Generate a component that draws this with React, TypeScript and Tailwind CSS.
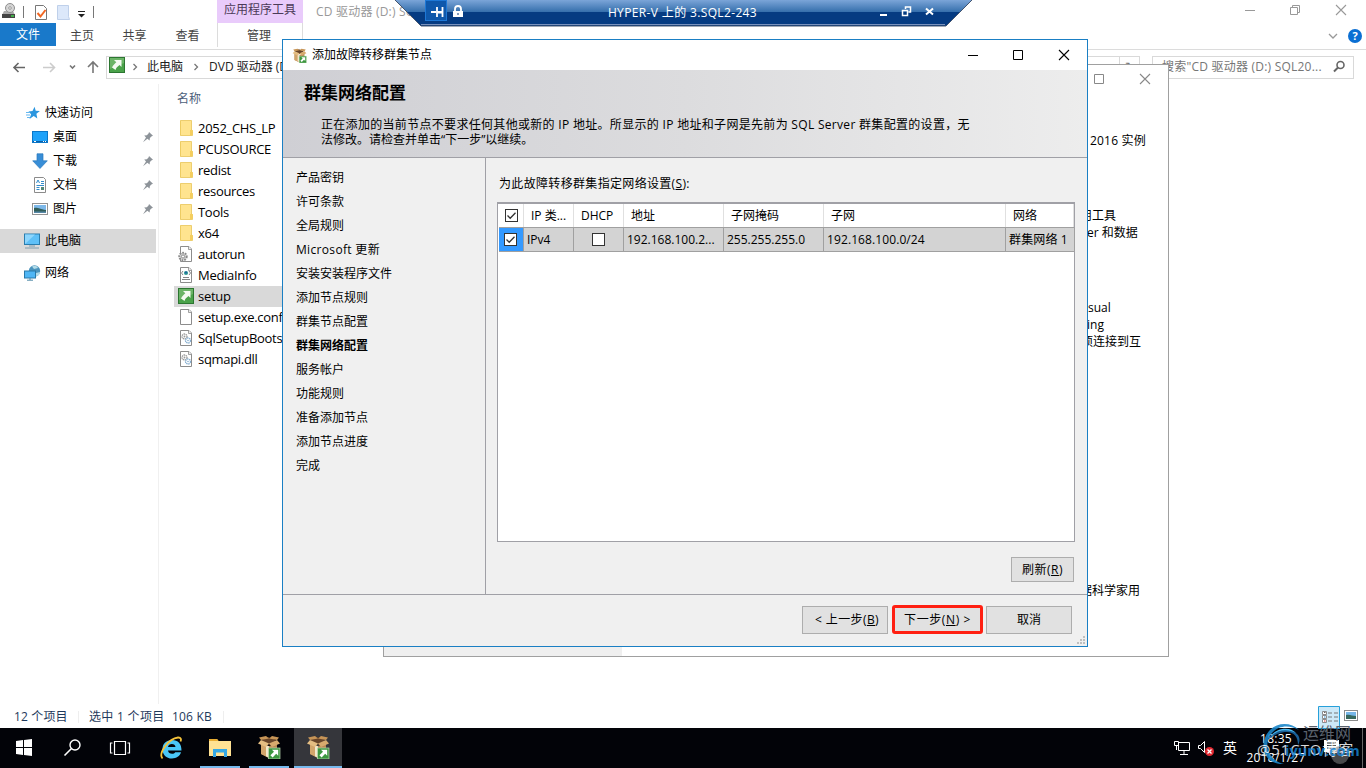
import type { ReactNode } from 'react';

interface IconProps {
  className?: string;
}

const FolderIcon = () => (
  <svg width="16" height="16" viewBox="0 0 16 16">
    <path d="M2 .5h11.5v9l1 .7v5.3H2z" fill="#ffe48f" />
    <path d="M2.500.5h11V10l1 .5v5h-12z" fill="none" stroke="#e9c558" strokeWidth=".8" />
    <path d="M12 15V10h2.500v5z" fill="#f5ce5d" />
  </svg>
);

const PageIcon = ({ kind }: { kind: 'plain' | 'gear' | 'media' | 'dll' }) => (
  <svg width="16" height="16" viewBox="0 0 16 16">
    <path d="M2.500.5h8.500l2.500 2.500v12.500h-11z" fill="#fff" stroke="#8c8c8c" />
    <path d="M10.500.5v3h3" fill="#eee" stroke="#8c8c8c" strokeWidth=".8" />
    {kind === 'gear' && (
      <>
        <circle cx="5" cy="10.500" r="3.700" fill="#ddd" stroke="#8b8b8b" strokeWidth="2" strokeDasharray="1.700 1" />
        <circle cx="5" cy="10.500" r="1.600" fill="#fff" stroke="#8b8b8b" />
      </>
    )}
    {kind === 'media' && (
      <>
        <path d="M5 4 3.500 6 5 8M11 4l1.500 2L11 8M5 10.500h6M4 12.500h8" fill="none" stroke="#777" strokeWidth=".9" />
        <circle cx="8" cy="6" r="2.100" fill="#2f9c93" />
        <circle cx="8" cy="5.500" r="1" fill="#2357a5" />
      </>
    )}
    {kind === 'dll' && (
      <>
        <circle cx="6.500" cy="6.500" r="2.500" fill="none" stroke="#999" strokeWidth="1.300" strokeDasharray="1.500 .6" />
        <circle cx="6.500" cy="6.500" r=".9" fill="#999" />
        <circle cx="10" cy="10.500" r="2.500" fill="#fff" stroke="#84add0" strokeWidth="1.300" strokeDasharray="1.500 .6" />
        <circle cx="10" cy="10.500" r=".8" fill="#84add0" />
      </>
    )}
  </svg>
);

const SetupIcon = ({ className }: IconProps) => (
  <svg width="16" height="16" viewBox="0 0 16 16" className={className}>
    <rect x=".5" y=".5" width="15" height="15" fill="#4aa24a" stroke="#2c7631" />
    <path d="M1 1h14v5L1 12z" fill="#82c07b" opacity=".6" />
    <path d="M5 3h7.500v7l-2-2c-2 1.500-3.500 3-4 5L3 10.500C4 8.500 5.500 7 7.300 5.300z" fill="#f4faf2" />
  </svg>
);

const BoxIcon = ({ size }: { size: number }) => (
  <svg width={size} height={size} viewBox="0 0 24 24">
    <path d="M4 9l8 2 8-2v10l-8 4-8-4z" fill="#b98a55" />
    <path d="M4 9l7 2v11.500L4 19z" fill="#d2a56b" />
    <path d="M9 10.500l3 .7v11.500l-3-1.500z" fill="#f3e8cd" />
    <path d="M4 5l7-3 8 3-7 5z" fill="#68452a" />
    <path d="M4 5 1 8.500 9 12l3-3.500z" fill="#e4bd82" />
    <path d="M20 5l3 3.500L15 12l-3-3.500z" fill="#d7aa6e" />
    <path d="M4 5 2 2.500 9 1l3 2.500zM20 5l2-2.500L15 1l-3 2.500z" fill="#c79557" />
    <rect x="11.500" y="13" width="11.500" height="11" fill="#3c963f" stroke="#b9dab2" strokeWidth=".7" />
    <path d="M15 14.700h6.200v6.100l-2-2-3.600 3.700-2.200-2.200 3.600-3.600z" fill="#fff" />
  </svg>
);

const PinIcon = () => (
  <svg width="12" height="12" viewBox="0 0 12 12">
    <path d="M7 1l4 3.800-1.300.5-1.800 1.800-.3 2.500L5.400 7.700 1 11.300 4 6.500 2.200 4.500l2.700-.3 1.800-1.900z" fill="#8d9399" />
  </svg>
);

const PcIcon = () => (
  <svg width="16" height="16" viewBox="0 0 16 16">
    <rect x=".5" y="1" width="15" height="10.500" fill="#5fc0f7" stroke="#2a7dae" />
    <path d="M1 11V1.500h10z" fill="#8ed6fd" />
    <path d="M5 13h6M1 15h14" stroke="#7f9dae" />
  </svg>
);

const NetworkIcon = () => (
  <svg width="17" height="16" viewBox="0 0 17 16">
    <circle cx="10.500" cy="6" r="5.700" fill="#4b94bd" />
    <path d="M8 1.500c3-1.500 5-.5 6 1.500l-4 1zM12 8l4-1c0 3-2 4-4 4z" fill="#b4dce8" />
    <rect x=".5" y="6" width="11" height="7" fill="#4fb6f5" stroke="#2978a8" />
    <path d="M3 15.200h6M6 13v2" stroke="#528ba9" />
  </svg>
);

const DesktopIcon = () => (
  <svg width="16" height="16" viewBox="0 0 16 16">
    <rect x=".5" y="2.500" width="15" height="11" fill="#1ea2fa" stroke="#0b77c9" />
    <path d="M1 12.500h14" stroke="#0c5ea5" />
    <path d="M2 12.500h2M11 12.500h1M13 12.500h1" stroke="#fff" />
  </svg>
);

const DownloadIcon = () => (
  <svg width="16" height="16" viewBox="0 0 16 16">
    <path d="M5 .8h6v7h4.300L8 15.500.7 7.800H5z" fill="#388ed7" stroke="#2a78bd" strokeWidth=".7" />
  </svg>
);

const DocumentIcon = () => (
  <svg width="16" height="16" viewBox="0 0 16 16">
    <path d="M2.500.5h9l2 2v13h-11z" fill="#fff" stroke="#8b8b8b" />
    <path d="M4.500 6 6 3l1.500 3M9 4.500h3M9 6.500h3M4.500 8.500H12M4.500 10.500h3M4.500 12.500h3" fill="none" stroke="#338dcc" />
    <path d="M9 10h3v3H9z" fill="#528677" />
  </svg>
);

const PictureIcon = () => (
  <svg width="16" height="16" viewBox="0 0 16 16">
    <rect x=".5" y="2.500" width="15" height="11" fill="#fff" stroke="#929292" />
    <rect x="2" y="4" width="12" height="8" fill="#7db8e9" />
    <path d="M2 7c4-1 5 1 12 2v3H2z" fill="#315d58" />
    <path d="M2 10.500h12V12H2z" fill="#5788a7" />
  </svg>
);

const StarIcon = () => (
  <svg width="14" height="14" viewBox="0 0 14 14">
    <path d="M8.600.7 9.700 4.800l4.200.2-3.500 2.800.9 4.800-3.600-2.500-4.200 3 1.600-4.900L2.500 5.500l4-.6z" fill="#2b96df" />
    <path d="M0 6.500h4M0 9h4M1 11.500h3" stroke="#65b7ef" />
  </svg>
);

const WindowButtons = ({ color, restore }: { color: string; restore?: boolean }) => (
  <svg width="104" height="14" viewBox="0 0 104 14" fill="none" stroke={color}>
    <path d="M1 7.500h10" />
    {restore ? (
      <path d="M46.500 4.500h7v7h-7zM48.500 4.500v-2h7v7h-2" />
    ) : (
      <path d="M46.500 2.500h9v9h-9z" />
    )}
    <path d="m92 2 10 10m0-10L92 12" strokeWidth="1.100" />
  </svg>
);

const Checkbox = ({ checked }: { checked?: boolean }) => (
  <svg width="13" height="13" viewBox="0 0 13 13">
    <rect x=".5" y=".5" width="12" height="12" fill="#fff" stroke="#333" />
    {checked && <path d="m2.500 6.500 2.700 2.700 5.300-5.500" fill="none" stroke="#333" strokeWidth="1.300" />}
  </svg>
);

const quickAccess = [
  { label: '桌面', icon: <DesktopIcon /> },
  { label: '下载', icon: <DownloadIcon /> },
  { label: '文档', icon: <DocumentIcon /> },
  { label: '图片', icon: <PictureIcon /> },
];

const files: { name: string; icon: ReactNode }[] = [
  { name: '2052_CHS_LP', icon: <FolderIcon /> },
  { name: 'PCUSOURCE', icon: <FolderIcon /> },
  { name: 'redist', icon: <FolderIcon /> },
  { name: 'resources', icon: <FolderIcon /> },
  { name: 'Tools', icon: <FolderIcon /> },
  { name: 'x64', icon: <FolderIcon /> },
  { name: 'autorun', icon: <PageIcon kind="gear" /> },
  { name: 'MediaInfo', icon: <PageIcon kind="media" /> },
  { name: 'setup', icon: <SetupIcon /> },
  { name: 'setup.exe.config', icon: <PageIcon kind="plain" /> },
  { name: 'SqlSetupBootstrapper.dll', icon: <PageIcon kind="dll" /> },
  { name: 'sqmapi.dll', icon: <PageIcon kind="dll" /> },
];

const steps = [
  '产品密钥',
  '许可条款',
  '全局规则',
  'Microsoft 更新',
  '安装安装程序文件',
  '添加节点规则',
  '群集节点配置',
  '群集网络配置',
  '服务帐户',
  '功能规则',
  '准备添加节点',
  '添加节点进度',
  '完成',
];
const CURRENT_STEP = '群集网络配置';

const ExplorerTop = () => (
  <header className="h-[84px]">
    <div className="flex h-[23px]">
      <div className="flex w-[217px] items-center pl-0.5">
        <svg width="96" height="22" viewBox="0 0 96 22">
          <path d="M0 14h13l-2-4H2z" fill="#aaa" />
          <rect y="13" width="13" height="4" fill="#444" />
          <path d="M9 15h3" stroke="#40d34b" strokeWidth="1.500" />
          <circle cx="8" cy="7" r="4.500" fill="#d5d5d5" stroke="#8e8e8e" />
          <circle cx="8" cy="7" r="1.300" fill="#fff" stroke="#999" />
          <path d="M21.500 5v12M91.500 5v12" stroke="#777" />
          <path d="M33.500 4.500h8l3 3v11h-11z" fill="#fff" stroke="#777" />
          <path d="m35.500 12 3 3.500 5-6.500" fill="none" stroke="#f26722" strokeWidth="2" />
          <path d="M55.500 4.500h11v11l1 3h-12z" fill="#dce8fa" stroke="#bfd0ea" />
          <path d="M76 10.500h7" stroke="#222" />
          <path d="M76 13h7l-3.500 3.500z" fill="#222" />
        </svg>
      </div>
      <div className="flex w-[86px] justify-center bg-[#e9cbfb] pt-px text-[#4b3a57]">
        <span className="leading-[18px]">应用程序工具</span>
      </div>
      <span className="pl-[13px] pt-[3px] leading-[18px] tracking-[0.2px] text-[#999]">CD 驱动器 (D:) SQL2016</span>
      <div className="ml-auto pr-[18px] pt-[3px]">
        <WindowButtons color="#999" restore />
      </div>
    </div>
    <div className="flex h-[27px] border-b border-[#dcdcdc] text-[#444]">
      <div className="flex h-[23px] w-14 items-center justify-center bg-[#1979ca] text-white">文件</div>
      <div className="flex h-[25px] w-[52px] items-center justify-center">主页</div>
      <div className="flex h-[25px] w-[53px] items-center justify-center">共享</div>
      <div className="flex h-[25px] w-[53px] items-center justify-center">查看</div>
      <div className="ml-[3px] flex h-6 w-[86px] items-center justify-center border-x border-[#dcdcdc] pr-0.5 pt-px">管理</div>
      <div className="ml-auto flex items-center gap-2.5 pr-1">
        <svg width="10" height="6" viewBox="0 0 10 6" fill="none" stroke="#999" strokeWidth="1.300">
          <path d="m1 1 4 4 4-4" />
        </svg>
        <span className="flex h-3.5 w-3.5 items-center justify-center rounded-full bg-[#0b6fd3] text-[11px] font-bold text-white">
          ?
        </span>
      </div>
    </div>
    <div className="flex h-[34px] items-center">
      <svg width="106" height="24" viewBox="0 0 106 24" fill="none" strokeWidth="1.600">
        <path d="M25 12.500H14m4.500-4.500L14 12.500l4.500 4.500" stroke="#666" />
        <path d="M43 12.500h11.500M50 8l4.500 4.500L50 17" stroke="#ccc" />
        <path d="m70 10.500 2.500 2.500 2.500-2.500" stroke="#777" />
        <path d="M93 18V7m-5 5 5-5 5 5" stroke="#777" />
      </svg>
      <div className="flex h-[23px] w-[1034px] items-center border border-[#d9d9d9] pl-0.5">
        <SetupIcon className="mb-1" />
        <svg width="6" height="8" viewBox="0 0 6 8" className="ml-[7px]" fill="none" stroke="#777" strokeWidth="1.300">
          <path d="m1.500 1 3 3-3 3" />
        </svg>
        <span className="ml-[9px] text-[#222]">此电脑</span>
        <svg width="6" height="8" viewBox="0 0 6 8" className="ml-2.5" fill="none" stroke="#777" strokeWidth="1.300">
          <path d="m1.500 1 3 3-3 3" />
        </svg>
        <span className="ml-2.5 whitespace-nowrap text-[#222]">DVD 驱动器 (D:) SQL2016</span>
        <div className="ml-auto flex h-full w-5 items-center justify-center border-l border-[#d9d9d9] text-[#777]">↻</div>
      </div>
      <div className="ml-3 flex h-[23px] w-[202px] items-center border border-[#d9d9d9] pl-[9px] text-[#767676]">
        <span className="whitespace-nowrap tracking-[0.22px]">搜索&quot;CD 驱动器 (D:) SQL20...</span>
        <svg width="14" height="14" viewBox="0 0 14 14" className="ml-auto mr-[7px]" fill="none" stroke="#666">
          <circle cx="8.500" cy="5" r="3.500" strokeWidth="1.600" />
          <path d="m6 7.500-4 4" strokeWidth="2" />
        </svg>
      </div>
    </div>
  </header>
);

const Explorer = () => (
  <section className="flex h-[728px] w-full flex-col bg-white">
    <ExplorerTop />
    <div className="flex h-[620px]">
      <nav className="w-[159px] border-r border-[#f0f0f0] pt-[17px]">
        <div className="flex h-6 items-center pl-[26px]">
          <StarIcon />
          <span className="ml-[5px]">快速访问</span>
        </div>
        {quickAccess.map((item) => (
          <div key={item.label} className="flex h-6 items-center pl-8 pr-1">
            {item.icon}
            <span className="ml-[5px]">{item.label}</span>
            <span className="ml-auto">
              <PinIcon />
            </span>
          </div>
        ))}
        <div className="mt-2 flex h-6 w-[156px] items-center bg-[#d9d9d9] pl-6">
          <PcIcon />
          <span className="ml-[5px]">此电脑</span>
        </div>
        <div className="mt-2 flex h-6 items-center pl-6">
          <NetworkIcon />
          <span className="ml-1">网络</span>
        </div>
      </nav>
      <div className="w-[140px] pl-[15px]">
        <div className="flex h-[34px] items-center pb-1 pl-[3px] text-[#4c607a]">名称</div>
        <ul className="w-[200px]">
          {files.map((file) => (
            <li
              key={file.name}
              className={`flex h-[21px] items-center pb-px pl-1 text-[13px] tracking-[-0.3px] ${file.name === 'setup' ? 'bg-[#d9d9d9]' : ''}`}
            >
              {file.icon}
              <span className="ml-1 whitespace-nowrap">{file.name}</span>
            </li>
          ))}
        </ul>
      </div>
    </div>
    <footer className="flex h-6 items-center pl-3.5 pt-px text-[#1e395b]">
      <span className="w-[65px] border-r border-[#eee] leading-3 tracking-[0.15px]">12 个项目</span>
      <span className="ml-2.5 w-[75px] whitespace-nowrap leading-[18px] tracking-[0.3px]">选中 1 个项目</span>
      <span className="ml-2 w-[52px] whitespace-nowrap border-r border-[#eee] leading-3 tracking-[0.2px]">106 KB</span>
      <div className="ml-auto mr-1.5 flex h-6 items-center">
        <svg width="42" height="24" viewBox="0 0 42 24">
          <path d="M.5 1.500h21v22H.5z" fill="#cce8f7" stroke="#26a0da" />
          <path d="M4.500 6.500h4v3h-4zm0 4h4v3h-4zm0 4h4v3h-4z" fill="#fff" stroke="#8b8b8b" />
          <path d="M10 8h4m2 0h4m-10 4h4m2 0h4m-10 4h4m2 0h4" stroke="#777" />
          <path d="M6 7.500h1.500" stroke="#666" />
          <path d="M6 12h1.500" stroke="#258dd2" />
          <path d="M6 16h1.500" stroke="#d33" />
          <rect x="26.500" y="5.500" width="13" height="10" fill="#fff" stroke="#8c8c8c" />
          <path d="M28 7h10v7H28z" fill="#76b6e8" />
          <path d="M28 10c4-1 6 1 10 1v3H28z" fill="#38695e" />
        </svg>
      </div>
    </footer>
  </section>
);

// The installation centre window, mostly hidden behind the wizard
const InstallCenter = () => (
  <section className="absolute left-[383px] top-16 flex h-[593px] w-[786px] flex-col border border-[#a0a0a0] bg-white">
    <div className="flex h-[75px] justify-end pr-4 pt-[7px]">
      <WindowButtons color="#888" />
    </div>
    <div className="flex grow">
      <div className="w-[238px] bg-[#efefef]" />
      <div className="flex grow flex-col items-start whitespace-nowrap pl-[463px] leading-[17px]">
        <p className="-mt-2 ml-[5px] h-[75px] tracking-[0.2px]">2016 实例</p>
        <p className="-ml-[17px]">使用工具</p>
        <p className="h-[75px] pl-[2px]">er 和数据</p>
        <p className="pl-[3px]">sual</p>
        <p className="pl-[2px]">ing</p>
        <p className="-ml-1 h-[249px]">项连接到互</p>
        <p className="-ml-[5px]">据科学家用</p>
      </div>
    </div>
  </section>
);

const cell = 'flex items-center border-r border-[#a0a0a0] pl-[3px]';
const headCell = 'flex items-center border-r border-[#e0e0e0] pl-[7px]';

const NetworkGrid = () => (
  <div className="mt-[9px] h-[340px] w-[578px] border border-t-2 border-[#a0a0a6] bg-white pl-px">
    <div className="grid h-6 grid-cols-[25px_50px_50px_100px_100px_182px_68px] border-b border-[#a0a0a0]">
      <div className="flex items-center border-r border-[#e0e0e0] pl-1.5">
        <Checkbox checked />
      </div>
      <div className={headCell}>IP 类...</div>
      <div className={headCell}>DHCP</div>
      <div className={headCell}>地址</div>
      <div className={headCell}>子网掩码</div>
      <div className={headCell}>子网</div>
      <div className={headCell}>网络</div>
    </div>
    <div className="grid h-6 grid-cols-[25px_50px_50px_100px_100px_182px_69px] border-b border-[#a0a0a0] bg-[#d3d3d3]">
      <div className="flex items-center border-r border-[#a0a0a0] bg-[#3399ff] pl-[5px]">
        <Checkbox checked />
      </div>
      <div className={cell}>IPv4</div>
      <div className="flex items-center justify-center border-r border-[#a0a0a0]">
        <Checkbox />
      </div>
      <div className={cell}>192.168.100.2...</div>
      <div className={cell}>255.255.255.0</div>
      <div className={`${cell} tracking-[0.1px]`}>192.168.100.0/24</div>
      <div className={`${cell} whitespace-nowrap tracking-[0.15px]`}>群集网络 1</div>
    </div>
  </div>
);

const Wizard = () => (
  <section className="absolute left-[282px] top-[39px] flex h-[608px] w-[806px] flex-col border border-[#1a7fc4] bg-[#f0f0f0]">
    <div className="flex h-[30px] shrink-0 items-center bg-white pl-[9px] pr-4">
      <BoxIcon size={15} />
      <span className="ml-[5px]">添加故障转移群集节点</span>
      <div className="ml-auto">
        <WindowButtons color="#000" />
      </div>
    </div>
    <div className="h-[88px] shrink-0 border-b border-[#a0a0a6] bg-linear-to-r from-[#cfcfd4] via-[#dcdcde] to-[#ededed] pl-[21px] pt-[11px]">
      <h1 className="text-[17px] font-bold leading-6">群集网络配置</h1>
      <div className="mt-3 whitespace-nowrap pl-[17px] leading-[15px]">
        <p className="tracking-[0.31px]">
          正在添加的当前节点不要求任何其他或新的 IP 地址。所显示的 IP 地址和子网是先前为 SQL Server 群集配置的设置，无
        </p>
        <p>法修改。请检查并单击“下一步”以继续。</p>
      </div>
    </div>
    <div className="flex h-[437px] shrink-0 border-b border-[#a0a0a6]">
      <ul className="w-[203px] border-r border-[#a0a0a6] pl-[13px] pt-2">
        {steps.map((step) => (
          <li
            key={step}
            className={`h-6 leading-6 ${step === CURRENT_STEP ? 'font-bold' : ''} ${step.startsWith('Microsoft') ? 'tracking-[0.33px]' : ''}`}
          >
            {step}
          </li>
        ))}
      </ul>
      <div className="flex grow flex-col pl-[11px] pt-[17px]">
        <p className="pl-0.5 leading-[18px] tracking-[0.33px]">
          为此故障转移群集指定网络设置(<u>S</u>):
        </p>
        <NetworkGrid />
        <button className="ml-[514px] mt-[15px] h-[25px] w-[63px] border border-[#adadad] bg-[#e1e1e1] tracking-[0.5px]">
          刷新(<u>R</u>)
        </button>
      </div>
    </div>
    <div className="flex grow items-start justify-end pr-[15px] pt-2.5">
      <button className="mt-px h-7 w-[86px] whitespace-nowrap border border-[#adadad] bg-[#e1e1e1] pl-1 tracking-[0.4px]">
        &lt; 上一步(<u>B</u>)
      </button>
      <button className="ml-1 h-[29px] w-[91px] whitespace-nowrap rounded-[3px] border-3 border-[#ff2012] bg-[#e1e1e1] tracking-[0.6px]">
        下一步(<u>N</u>) &gt;
      </button>
      <button className="ml-[3px] mt-px h-7 w-[86px] border border-[#adadad] bg-[#e1e1e1]">取消</button>
    </div>
    <svg width="8" height="8" viewBox="0 0 8 8" className="absolute bottom-0.5 right-0.5" fill="#bfbfbf">
      <path d="M6 0h2v2H6zM3 3h2v2H3zM6 3h2v2H6zM0 6h2v2H0zM3 6h2v2H3zM6 6h2v2H6z" />
    </svg>
  </section>
);

const ConnectionBar = () => (
  <div className="absolute left-[395px] top-0 h-[27px] w-[577px]">
    <svg width="577" height="27" viewBox="0 0 577 27" className="absolute inset-0">
      <defs>
        <linearGradient id="bar" x1="0" y1="0" x2="0" y2="1">
          <stop offset="0" stopColor="#7ba5d8" />
          <stop offset=".46" stopColor="#356fac" />
          <stop offset=".47" stopColor="#053b82" />
          <stop offset="1" stopColor="#053b82" />
        </linearGradient>
      </defs>
      <path d="M0 0h577l-26 26H26z" fill="url(#bar)" />
      <path d="m0 0 26 26h525l26-26" fill="none" stroke="#44546e" />
      <path d="M26 24.500h524" stroke="#7891bd" />
      <rect x="30.500" y=".5" width="21" height="20" fill="#0f58ab" stroke="#1e78d6" />
      <path d="M36 12h5M42 7v10M42 12h5M47.500 7v10" stroke="#fff" strokeWidth="1.800" />
      <path d="M43 13h5" stroke="#fff" />
      <path d="M58 11h10v6H58z" fill="#fff" />
      <path d="M60 11V9a3 3 0 0 1 6 0v2" fill="none" stroke="#fff" strokeWidth="1.800" />
      <path d="M63 13v2" stroke="#053b82" />
      <path d="M485 15h7M531 8.500l7 6m0-6-7 6" stroke="#fff" strokeWidth="2" />
      <path d="M507.500 10.500h5v5h-5zM510.500 9V7h5v5h-2" fill="none" stroke="#fff" strokeWidth="1.500" />
    </svg>
    <p className="relative pr-0.5 pt-1 text-center leading-[18px] tracking-[0.36px] text-white">HYPER-V 上的 3.SQL2-243</p>
  </div>
);

const Taskbar = () => (
  <footer className="flex h-10 w-full bg-[#020308] text-white">
    <svg width="148" height="40" viewBox="0 0 148 40" fill="none" stroke="#fff">
      <path d="m16 13 7-1v7h-7zm8-1 8-1v8h-8zm-8 8h7v7l-7-1zm8 0h8v8l-8-1z" fill="#fff" stroke="none" />
      <circle cx="75" cy="17" r="5" strokeWidth="1.400" />
      <path d="m71.500 20.500-7 7" strokeWidth="1.600" />
      <path d="M114.500 13.500h11v13h-11zM112.500 15h-2v10h2M127.500 15h2v10h-2" strokeWidth="1.200" />
    </svg>
    <div className="flex w-[46px] items-center justify-center">
      <svg width="24" height="24" viewBox="0 0 24 24" fill="none">
        <path
          d="M22.500 14.500H9c.3 2.300 2 3.300 4 3.300 1.500 0 2.500-.5 3.200-1.500h5.800c-1.200 4-4.600 6.200-9 6.200-5.800 0-9.500-3.800-9.500-9.300C3.500 7.500 7.500 4 13 4c6 0 9.700 4 9.500 10.500zM9 11h7.500c-.2-1.900-1.600-3-3.600-3S9.300 9.100 9 11z"
          fill="#4ac7f7"
        />
        <path d="M3.500 22.500C-1 17.500 9.500 2.500 19 1.500c3-.2 3.500 1.700 2.500 4" stroke="#f5c33b" strokeWidth="1.800" />
      </svg>
    </div>
    <div className="ml-1.5 flex h-10 w-10 items-center justify-center border-b-2 border-[#76b9ed] pt-px">
      <svg width="22" height="20" viewBox="0 0 22 20">
        <path d="M0 1h8l1.500 2H22v15H0z" fill="#ffe293" />
        <path d="M0 1h8l1.500 2H0z" fill="#e9ad32" />
        <path d="M4 19v-8h14v8h-3v-4.500H7V19z" fill="#35a8e4" />
      </svg>
    </div>
    <div className="ml-[9px] flex h-10 w-10 items-center justify-center border-b-2 border-[#76b9ed]">
      <BoxIcon size={24} />
    </div>
    <div className="ml-[5px] flex h-10 w-12 items-center justify-center border-b-2 border-[#76b9ed] bg-[#35363b]">
      <BoxIcon size={24} />
    </div>
    <div className="ml-auto flex w-[192px] items-center">
      <svg width="42" height="18" viewBox="0 0 42 18" fill="none" stroke="#fff">
        <path d="M4.500 3.500h11v8h-11zM10 12v3m-4 .5h8M.5 2.500h4v4h-4zM2.500 7v4" />
        <path d="M24.500 6.500h2l4-4v11l-4-4h-2z" />
        <circle cx="35.500" cy="12.500" r="4.500" fill="#e22a32" stroke="none" />
        <path d="m33.500 10.500 4 4m0-4-4 4" strokeWidth="1.300" />
      </svg>
      <span className="ml-[7px] text-[14px] leading-5">英</span>
      <div className="ml-2 flex w-[62px] flex-col items-center whitespace-nowrap leading-[19px] tracking-[0.25px]">
        <span>18:35</span>
        <span>2018/1/27</span>
      </div>
      <svg width="18" height="16" viewBox="0 0 18 16" className="ml-4">
        <path d="M1 0h15v12H9l-3 3v-3H1z" fill="#fff" />
        <path d="M4 3h9M4 5.500h9M4 8h9" stroke="#222" />
      </svg>
      <span className="ml-auto mr-[3px] h-10 border-l border-[#666]" />
    </div>
  </footer>
);

const Watermark = () => (
  <div className="absolute left-[1256px] top-[720px] h-12 w-[110px] whitespace-nowrap">
    <svg width="110" height="48" viewBox="0 0 110 48" className="absolute inset-0">
      <circle cx="84" cy="35" r="9" fill="#777" opacity=".6" />
      <path d="M28 44C7 45 2 24 13 11c8-9 22-9 30-1-9-5-20-5-27 3-9 10-5 27 12 31z" fill="#1c86c9" opacity=".9" />
      <path d="M11 21c5-12 22-17 31-6 2 3 2 7 0 10 0-8-4-13-11-13-8 0-15 4-20 9z" fill="#1d6fae" opacity=".85" />
      <path d="M15 16C20 8 34 6 40 13 32 9 23 9 15 16z" fill="#49baf0" />
    </svg>
    <p className="absolute left-[47px] top-[3px] text-[16px] leading-5 text-[#59616c]">运维网</p>
    <p className="absolute left-px top-[19px] text-[15px] leading-5 tracking-[0.9px] text-white/85">@51CTO博客</p>
    <p className="absolute left-[29px] top-[21px] text-[14.5px] font-bold leading-5 text-[#1681d1]/85">iyunv.com</p>
  </div>
);

const App = () => (
  <main className="relative h-[768px] w-[1366px] overflow-hidden bg-white font-['Open_Sans','Noto_Sans_CJK_SC',sans-serif] text-[12px] leading-[18px] text-black">
    <Explorer />
    <InstallCenter />
    <Wizard />
    <ConnectionBar />
    <Taskbar />
    <Watermark />
  </main>
);

export default App;
